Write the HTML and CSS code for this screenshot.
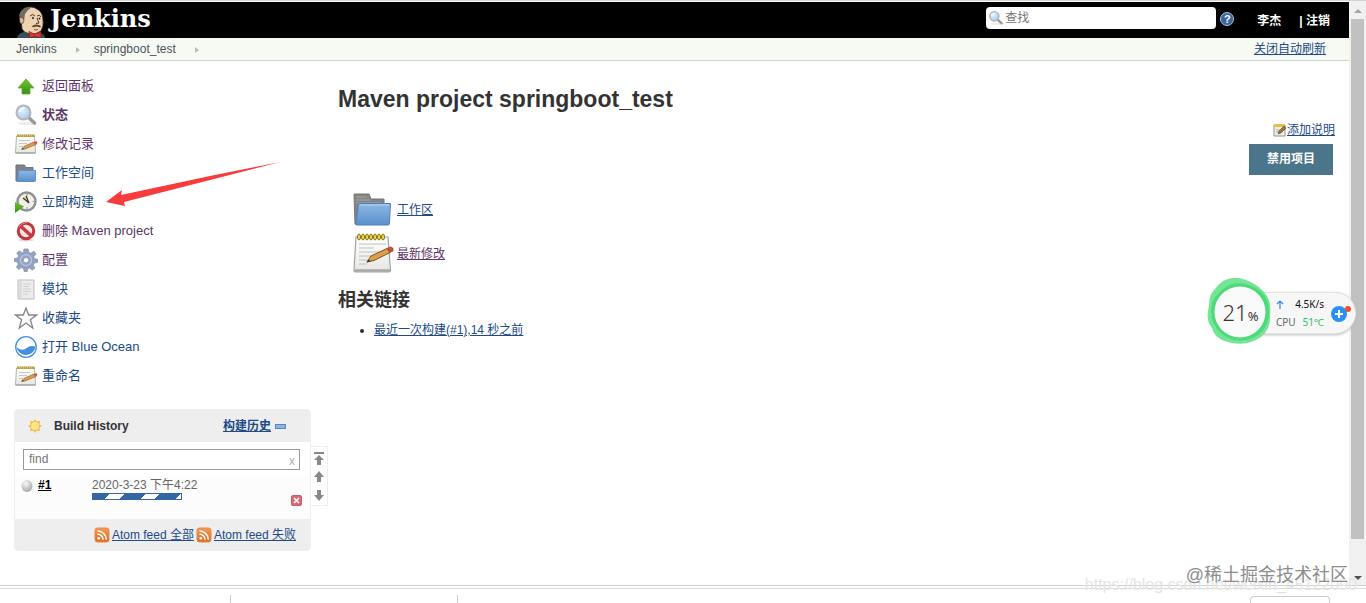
FILE: index.html
```html
<!DOCTYPE html>
<html lang="zh-CN">
<head>
<meta charset="utf-8">
<meta name="viewport" content="width=device-width, initial-scale=1">
<title>springboot_test [Jenkins]</title>
<link rel="stylesheet" href="styles.css">
</head>
<body>
<svg class="sprite" aria-hidden="true">
  <defs>
    <linearGradient id="gFolder" x1="0" y1="0" x2="0" y2="1"><stop offset="0" stop-color="#8db8e4"/><stop offset="1" stop-color="#5a8fcb"/></linearGradient>
    <linearGradient id="gPaper" x1="0" y1="0" x2="0" y2="1"><stop offset="0" stop-color="#ffffff"/><stop offset="1" stop-color="#e6e6e2"/></linearGradient>
    <linearGradient id="gGreen" x1="0" y1="0" x2="0" y2="1"><stop offset="0" stop-color="#6cc52f"/><stop offset="1" stop-color="#3c8f12"/></linearGradient>
    <linearGradient id="gRss" x1="0" y1="0" x2="0" y2="1"><stop offset="0" stop-color="#f39a56"/><stop offset="1" stop-color="#e0691c"/></linearGradient>
    <radialGradient id="gBall" cx=".4" cy=".3" r=".7"><stop offset="0" stop-color="#fafafa"/><stop offset="1" stop-color="#a9a9a9"/></radialGradient>
    <radialGradient id="gGlass" cx=".4" cy=".35" r=".7"><stop offset="0" stop-color="#e6f2fd"/><stop offset="1" stop-color="#a4c8ea"/></radialGradient>
  </defs>
  <symbol id="i-up" viewBox="0 0 24 24"><path d="M12 5 20 14H16V20H8V14H4Z" fill="url(#gGreen)" stroke="#5cab30" stroke-width=".8"/></symbol>
  <symbol id="i-search" viewBox="0 0 24 24"><ellipse cx="13" cy="20.5" rx="9" ry="1.6" fill="#ececec"/><path d="M14.500 14.500 20.500 20" stroke="#9a9a9a" stroke-width="3.600" stroke-linecap="round"/><circle cx="9.500" cy="9.500" r="7" fill="url(#gGlass)" stroke="#b3b5b7" stroke-width="2"/><path d="M5.500 9a4.500 4.500 0 0 1 5-4" stroke="#fff" stroke-width="1.400" fill="none"/></symbol>
  <symbol id="i-note" viewBox="0 0 24 24"><path d="M2.500 4H20.500L21.500 21H1.500Z" fill="url(#gPaper)" stroke="#b2b2ac"/><path d="M3 2.500H20.500V5H3Z" fill="#b99b3b"/><path d="M5 3.800H19" stroke="#eedb88" stroke-dasharray="1 1"/><path d="M5 8.500H16M5 11.500H13M5 14.500H9" stroke="#c6c6c6"/><path d="M1.500 21H21.500" stroke="#989898"/><path d="M8 17 10 14.500 20 10 22 12.500 11 17Z" fill="#dc9d43" stroke="#8b6635" stroke-width=".7"/><path d="M19.500 10.200 21.500 9.200Q24 9.500 23 11.700L21.500 12.700Z" fill="#d45542"/><path d="M7 17.800 8.500 15.800 10 17.300Z" fill="#444"/></symbol>
  <symbol id="i-folder" viewBox="0 0 24 24"><path d="M2 4H10.500L11.500 6.500H19V10H4V20H2Z" fill="#7c858e" stroke="#68727c"/><path d="M4.500 9.500H21.500V19.500Q21.500 20.500 20.500 20.500H3.500Z" fill="url(#gFolder)" stroke="#5f8fc4"/></symbol>
  <symbol id="i-clock" viewBox="0 0 24 24"><circle cx="12.500" cy="11.500" r="9" fill="#f0efe8" stroke="#8d9193" stroke-width="2.400"/><path d="M13 4V6M20 11.500H18.500M13 19V17" stroke="#999"/><path d="M8 8 14 6V12Z" fill="#e2d47c"/><path d="M15 13 9 8M15 13 12 6" stroke="#39352e" stroke-width="1.200"/><path d="M1 12 10 16.500 1 23Z" fill="url(#gGreen)"/></symbol>
  <symbol id="i-stop" viewBox="0 0 24 24"><ellipse cx="12" cy="21" rx="8" ry="1.500" fill="#ddd"/><circle cx="12" cy="12" r="7.700" fill="#f5e7e7" stroke="#c2363a" stroke-width="3"/><path d="M6.500 7 17.500 17" stroke="#cc3a3e" stroke-width="3.600"/><path d="M5 8Q8 3.500 13 3.500" stroke="#e78486" fill="none"/></symbol>
  <symbol id="i-gear" viewBox="0 0 24 24"><path fill-rule="evenodd" d="M10 1H14L14.600 4.300 17 5.300 20 3.300 22 6 19.700 8.800 20.500 10.800 23.500 11.300V14.300L20.300 15 19.200 17.200 21 20 18.300 22 15.500 20 13.800 20.600 13.200 23.500H10.200L9.600 20.500 7.300 19.600 4.600 21.500 2.500 19 4.300 16.200 3.500 14 .5 13.500V10.500L3.800 10 4.700 7.800 2.800 5 5.500 3 8.200 4.900 9.500 4.300ZM12 9.500A2.700 2.700 0 1 0 12 14.900 2.700 2.700 0 1 0 12 9.500Z" fill="#93a2c4" stroke="#8790a8" stroke-width=".8"/><circle cx="12" cy="12.200" r="5.500" fill="none" stroke="#b3c0da" stroke-width="1.500"/></symbol>
  <symbol id="i-doc" viewBox="0 0 24 24"><path d="M4 3H20V22H4Z" fill="#ededed" stroke="#bcbcbc"/><path d="M5 4H8V21H5Z" fill="#dcdcdc"/><path d="M9 7H17M9 9.500H15M9 12H17M9 14.500H17M9 17H14" stroke="#cecece"/></symbol>
  <symbol id="i-star" viewBox="0 0 24 24"><path d="M12 2 14.700 9H22.500L16.400 13.800 18.800 22 12 17 5.200 22 7.600 13.800 1.500 9H9.300Z" fill="#fbfbfb" stroke="#858585" stroke-width="1.300"/></symbol>
  <symbol id="i-ocean" viewBox="0 0 24 24"><circle cx="12" cy="12" r="10.300" fill="#fff" stroke="#4a8ed8" stroke-width="1.300"/><path d="M2.500 12C6 15 9 15.500 12 13.500S16 10 21.500 11.500A9.600 9.600 0 0 1 2.500 12Z" fill="#438ee0"/></symbol>
  <symbol id="i-rss" viewBox="0 0 16 16"><rect x="1" y="1" width="14" height="14" rx="2.500" fill="url(#gRss)" stroke="#e58a4b"/><circle cx="4.800" cy="11.300" r="1.400" fill="#fff"/><path d="M3.500 7.200A5.300 5.300 0 0 1 9 12.700M3.500 4A8.700 8.700 0 0 1 12.300 12.700" stroke="#fff" stroke-width="1.600" fill="none"/></symbol>
</svg>

<div class="window">
  <div class="page">
    <header class="header">
      <a class="brand" href="#">
        <svg class="butler" viewBox="0 0 30 32" aria-hidden="true">
          <path d="M1 32Q2 27 8 26L24 27Q29 28 29 32Z" fill="#335061"/>
          <path d="M6 23 5 14Q3 6 9 3 15-1 21 3 27 6 27 14 28 20 25 25 20 29 14 28 8 27 6 23Z" fill="#eed2b2" stroke="#30241b" stroke-width=".8"/>
          <path d="M5 15Q1 8 6 4 10 0 16 1 11 4 9 8L8 15Q8 18 5 18Z" fill="#6f6a62"/>
          <path d="M3.500 12Q7 10 8 15 7 19 4 17Z" fill="#e2bd98" stroke="#493a2d" stroke-width=".6"/>
          <path d="M14 10Q17 7 19 10M21 10Q24 8 25 11M21 12 23 17 20 17.500" fill="none" stroke="#4c3b2c"/>
          <circle cx="17" cy="12" r="1" fill="#222"/><circle cx="23.500" cy="12.500" r=".9" fill="#222"/>
          <path d="M16 20Q20 17 25 20L24 21.500Q20 19.500 17 21.500Z" fill="#51412e"/>
          <path d="M18 23.500Q20 24.500 22 23.500" fill="none" stroke="#8a4c3d"/>
          <path d="M13 25.500 18.500 28 25 25.500V32L18.500 30.500 13.500 32Z" fill="#d33833" stroke="#821512" stroke-width=".6"/>
        </svg>
        <span class="brand-name">Jenkins</span>
      </a>
      <div class="header-tools">
        <label class="search"><svg class="ico16" aria-hidden="true"><use href="#i-search"/></svg><input type="search" placeholder="查找" aria-label="查找"></label>
        <a class="help" href="#" aria-label="帮助">?</a>
        <a class="user" href="#">李杰</a>
        <a class="logout" href="#">| 注销</a>
      </div>
    </header>

    <nav class="crumbs" aria-label="路径">
      <a href="#">Jenkins</a><i class="caret"></i>
      <a href="#">springboot_test</a><i class="caret"></i>
      <a class="refresh" href="#">关闭自动刷新</a>
    </nav>

    <div class="body">
      <aside class="side">
        <ul class="tasks">
          <li><a class="visited" href="#"><svg class="ico24"><use href="#i-up"/></svg>返回面板</a></li>
          <li><a class="visited current" href="#"><svg class="ico24"><use href="#i-search"/></svg>状态</a></li>
          <li><a class="visited" href="#"><svg class="ico24"><use href="#i-note"/></svg>修改记录</a></li>
          <li><a href="#"><svg class="ico24"><use href="#i-folder"/></svg>工作空间</a></li>
          <li class="marked"><a href="#"><svg class="ico24"><use href="#i-clock"/></svg>立即构建</a>
            <svg class="arrow" viewBox="0 0 176 46" aria-hidden="true"><path d="M0 41 16 29 15 34 104 15 174 1 104 19 18 41L19 45Z" fill="#f83b3b"/></svg></li>
          <li><a class="visited" href="#"><svg class="ico24"><use href="#i-stop"/></svg>删除 Maven project</a></li>
          <li><a class="visited" href="#"><svg class="ico24"><use href="#i-gear"/></svg>配置</a></li>
          <li><a href="#"><svg class="ico24"><use href="#i-doc"/></svg>模块</a></li>
          <li><a href="#"><svg class="ico24"><use href="#i-star"/></svg>收藏夹</a></li>
          <li><a href="#"><svg class="ico24"><use href="#i-ocean"/></svg>打开 Blue Ocean</a></li>
          <li><a href="#"><svg class="ico24"><use href="#i-note"/></svg>重命名</a></li>
        </ul>

        <div class="history">
          <section class="pane">
            <div class="pane-head">
              <svg class="ico16" viewBox="0 0 16 16" aria-hidden="true"><path d="M8 1 9.500 3.500 13 3 12.500 6.500 15 8 12.500 9.500 13 13 9.500 12.500 8 15 6.500 12.500 3 13 3.500 9.500 1 8 3.500 6.500 3 3 6.500 3.500Z" fill="#f3b94c"/><circle cx="8" cy="8" r="4" fill="#fce889"/></svg>
              <h3>Build History</h3>
              <a class="trend" href="#">构建历史</a>
              <button class="collapse" type="button" aria-label="折叠"></button>
            </div>
            <div class="find">
              <input type="text" placeholder="find" aria-label="find">
              <button type="button" aria-label="清除">x</button>
            </div>
            <div class="build">
              <svg class="ball" viewBox="0 0 12 12" aria-hidden="true"><ellipse cx="6" cy="6" rx="5.500" ry="6" fill="url(#gBall)"/></svg>
              <a class="build-no" href="#">#1</a>
              <div class="build-info"><a href="#">2020-3-23 下午4:22</a><div class="progress" role="progressbar" aria-label="#1"><span></span></div></div>
              <button class="cancel" type="button" aria-label="取消"><svg viewBox="0 0 9 9"><path d="M2 2 7 7M7 2 2 7" stroke="#fff" stroke-width="1.600"/></svg></button>
            </div>
            <div class="feeds">
              <svg class="ico16"><use href="#i-rss"/></svg><a href="#">Atom feed 全部</a>
              <svg class="ico16"><use href="#i-rss"/></svg><a href="#">Atom feed 失败</a>
            </div>
          </section>
          <div class="pager">
            <button type="button" aria-label="顶部"><svg viewBox="0 0 12 14"><path d="M1 0H11V2H1ZM6 3 11 8H8V13H4V8H1Z"/></svg></button>
            <button type="button" aria-label="上一页"><svg viewBox="0 0 12 14"><path d="M6 1 11 7H8V12H4V7H1Z"/></svg></button>
            <button type="button" aria-label="下一页"><svg viewBox="0 0 12 14"><path d="M6 13 11 7H8V2H4V7H1Z"/></svg></button>
          </div>
        </div>
      </aside>

      <main class="main">
        <h1>Maven project springboot_test</h1>
        <div class="actions">
          <a class="describe" href="#"><svg class="ico14" viewBox="0 0 14 14" aria-hidden="true"><path d="M1 2H12V13H1Z" fill="#efefe8" stroke="#8f8f88"/><path d="M1 1H12V4H1Z" fill="#e2c044"/><path d="M3 7H8M3 9H6" stroke="#aaa"/><path d="M5 11 6 8 11 3 13 5 8 10Z" fill="#8f7840" stroke="#5a4a2c" stroke-width=".6"/></svg>添加说明</a>
          <button class="disable" type="button">禁用项目</button>
        </div>
        <ul class="shortcuts">
          <li><svg class="ico44" viewBox="0 0 44 44" aria-hidden="true"><path d="M4 6H19L21 11H34V16H8V36H5Z" fill="#858585" stroke="#757575"/><path d="M6 9H17M6 12H20M6 15H31" stroke="#a5a5a5"/><path d="M8.500 15.500H40.500L39.500 35Q39.500 37 38 37H7Q5 37 6 35Z" fill="url(#gFolder)" stroke="#4f80b7"/><path d="M10 17H39" stroke="#b5d4f2"/></svg><a href="#">工作区</a></li>
          <li><svg class="ico44" viewBox="0 0 44 44" aria-hidden="true"><path d="M6 5H38L40.500 38Q40.500 40 39 40H6Q4 40 4 38Z" fill="url(#gPaper)" stroke="#a2a2a2" stroke-width="1.200"/><path d="M5 38.500H40" stroke="#a9a9a9" stroke-width="2.500"/><path d="M9 12H36M9 16H24M9 20H31M9 24H26M9 28H18M9 32H17" stroke="#c0c0c0"/><g fill="#f2dc4b" stroke="#877315"><ellipse cx="9" cy="5" rx="1.500" ry="3"/><ellipse cx="13" cy="5" rx="1.500" ry="3"/><ellipse cx="17" cy="5" rx="1.500" ry="3"/><ellipse cx="21" cy="5" rx="1.500" ry="3"/><ellipse cx="25" cy="5" rx="1.500" ry="3"/><ellipse cx="29" cy="5" rx="1.500" ry="3"/><ellipse cx="33" cy="5" rx="1.500" ry="3"/></g><path d="M17 30 21 24 37 16.500 40 20.500 24 28.500Z" fill="#dda044" stroke="#775327"/><path d="M37 16.500 40 15Q44 15 43 19L40 20.500Z" fill="#d34b40" stroke="#8a4039" stroke-width=".6"/><path d="M16.500 30.500 18.500 27.500 20.500 29.300Z" fill="#333"/></svg><a class="visited" href="#">最新修改</a></li>
        </ul>
        <h2>相关链接</h2>
        <ul class="links"><li><a href="#">最近一次构建(#1),14 秒之前</a></li></ul>
      </main>
    </div>
  </div>
  <div class="scroll" aria-hidden="true"><i class="tri up"></i><i class="thumb"></i><i class="tri down"></i></div>
</div>

<div class="shelf" aria-hidden="true"><i class="slot first"></i><i class="slot"></i><i class="tab"></i></div>

<div class="monitor">
  <svg class="ring" viewBox="0 0 66 68" aria-hidden="true"><path d="M8 12Q20-4 39 3 50 7 57 15 65 24 63 38 64 52 54 60 41 69 25 66 8 63 5 51-2 43 2 29 2 17 8 12Z" fill="#74e495"/><path d="M12 16Q25 1 45 9 62 17 62 34 62 52 48 60 31 68 16 58 4 49 4 33 4 23 12 16Z" fill="#42d673" opacity=".75"/><circle cx="33" cy="35" r="25.500" fill="#f9f9f9"/></svg>
  <div class="percent"><b>21</b>%</div>
  <div class="stats">
    <div class="stat"><svg viewBox="0 0 8 9" aria-hidden="true"><path d="M4 9V1M1 4 4 1 7 4" fill="none" stroke="#2c8cf4" stroke-width="1.200"/></svg><span>4.5K/s</span></div>
    <div class="stat cpu"><span>CPU</span><em>51℃</em></div>
  </div>
  <button class="boost" type="button" aria-label="加速"><svg viewBox="0 0 20 20"><circle cx="8" cy="11" r="8" fill="#2b90f5"/><path d="M8 7V15M4 11H12" stroke="#fff" stroke-width="2"/><circle cx="17" cy="6" r="3" fill="#f0502c"/></svg></button>
</div>
<div class="mark url">https://blog.csdn.net/weixin_45122090</div>
<div class="mark site">@稀土掘金技术社区</div>
</body>
</html>
```
FILE: styles.css
```css
* { box-sizing: border-box; }
body {
  margin: 0;
  min-height: 100vh;
  display: flex;
  flex-direction: column;
  position: relative;
  overflow: hidden;
  background: #fff;
  color: #333;
  font: 12px/16px "Liberation Sans", "Noto Sans CJK SC", sans-serif;
}
a { color: #204a87; }
a.visited { color: #5c3566; }
h1, h2, h3, ul { margin: 0; padding: 0; }
button { border: 0; padding: 0; background: none; font: inherit; cursor: pointer; }
svg { display: block; flex: none; }
.sprite { position: absolute; width: 0; height: 0; }
.ico14 { width: 14px; height: 14px; }
.ico16 { width: 16px; height: 16px; }
.ico24 { width: 24px; height: 24px; }
.ico44 { width: 44px; height: 44px; }

.window { flex: 1; display: flex; border-top: 1px solid #d4d4d4; border-bottom: 1px solid #ccd3cc; }
.page { flex: 1; min-width: 0; padding-top: 1px; }

.header { display: flex; justify-content: space-between; height: 36px; padding: 0 19px 0 16px; background: #000; overflow: hidden; }
.brand { display: flex; text-decoration: none; gap: 4px; padding-top: 4px; }
.butler { width: 30px; height: 32px; }
.brand-name { color: #fff; font: bold 24px/25px "DejaVu Serif", serif; }
.header-tools { display: flex; align-items: flex-start; padding-top: 5px; }
.search { display: flex; align-items: center; gap: 1px; width: 230px; height: 22px; padding: 0 2px; border-radius: 4px; background: #fff; }
.search input { flex: 1; min-width: 0; border: 0; padding: 0; outline: 0; background: none; font: inherit; }
::placeholder { color: #757575; opacity: 1; }
.help { width: 14px; height: 14px; margin: 5px 23px 0 4px; border: 1px solid #a9c3e3; border-radius: 50%; background: #3a639f; color: #fff; font: bold 11px/12px "Liberation Sans", sans-serif; text-align: center; text-decoration: none; }
.user, .logout { padding-top: 6px; color: #fff; font-weight: bold; text-decoration: none; }
.logout { margin-left: 18px; }

.crumbs { display: flex; align-items: center; height: 23px; padding: 0 23px 0 16px; border-bottom: 1px solid #ced5ce; background: #f6faf2; }
.crumbs a { color: #4d545d; text-decoration: none; }
.crumbs .caret { width: 0; height: 0; margin: 2px 14px 0 19px; border: 3px solid transparent; border-left: 4px solid #b8bab6; border-right: 0; }
.crumbs .refresh { margin-left: auto; color: #204a87; text-decoration: underline; }

.body { display: flex; gap: 10px; padding: 10px 14px 0; }
.side { flex: none; width: 314px; }
.tasks { list-style: none; font-size: 13px; }
.tasks li { height: 29px; display: flex; align-items: center; }
.tasks a { display: flex; align-items: center; gap: 4px; text-decoration: none; }
.tasks .current { font-weight: bold; }
.marked { position: relative; }
.arrow { position: absolute; left: 92px; bottom: 9px; width: 176px; height: 46px; }

.history { display: flex; align-items: flex-start; margin-top: 19px; }
.pane { flex: 1; min-width: 0; border: 1px solid #eee; border-radius: 4px; background: #fff; }
.pane-head { display: flex; align-items: center; height: 32px; padding: 0 24px 0 12px; background: #eee; }
.pane-head h3 { margin-left: 11px; font-size: 12px; }
.trend { margin-left: auto; font-weight: bold; }
.collapse { width: 11px; height: 5px; margin-left: 4px; border: 1px solid #538abd; background: #8bb5dc; }
.find { display: flex; margin: 7px 10px 6px 8px; height: 21px; border: 1px solid #999; }
.find input { flex: 1; min-width: 0; border: 0; padding: 0 5px 2px; outline: 0; font: inherit; }
.find button { padding: 2px 4px 0; color: #aaa; }
.build { display: flex; align-items: flex-start; height: 43px; padding: 1px 8px 0 6px; background: #fcfcfc; }
.ball { width: 12px; height: 12px; margin-top: 3px; }
.build-no { width: 54px; margin-left: 5px; color: #000; font-weight: bold; }
.build-info { flex: 1; }
.build-info a { color: #666; text-decoration: none; }
.progress { width: 90px; height: 7px; border: 1px solid #3465a4; background: #fff; }
.progress span { display: block; height: 5px; background: repeating-linear-gradient(135deg, #3465a4 0 12px, #fff 12px 22px, #3465a4 22px 25px); }
.cancel { width: 11px; height: 11px; align-self: flex-end; margin-bottom: 13px; border: 1px solid #c55c66; border-radius: 2px; background: #dc6872; }
.feeds { display: flex; align-items: center; justify-content: flex-end; gap: 2px; height: 31px; padding-right: 14px; background: #eee; }
.pager { flex: none; width: 17px; margin-top: 37px; padding: 5px 0 3px; border: 1px solid #eee; border-left: 0; display: grid; justify-items: center; gap: 4px; }
.pager svg { width: 12px; height: 14px; fill: #888; }

.main { flex: 1; min-width: 0; }
.main h1 { padding-top: 14px; font-size: 23px; line-height: 28px; }
.actions { display: flex; flex-direction: column; align-items: flex-end; padding-top: 9px; }
.describe { display: flex; align-items: center; }
.disable { margin: 6px 2px 13px 0; padding: 7px 18px 8px; background: #4b758b; color: #fff; font-weight: bold; }
.shortcuts { list-style: none; padding-left: 12px; }
.shortcuts li { display: flex; align-items: center; gap: 3px; }
.main h2 { padding-top: 12px; font-size: 18px; line-height: 24px; }
.links { padding: 10px 0 0 36px; }

.scroll { flex: none; width: 17px; display: flex; flex-direction: column; align-items: center; padding: 8px 0 5px; background: #f1f1f1; }
.tri { border: 4px solid transparent; }
.tri.up { border-top: 0; border-bottom-color: #a3a3a3; }
.tri.down { margin-top: auto; border-bottom: 0; border-top-color: #505050; }
.thumb { flex: 0 0 91%; width: 13px; margin-top: 6px; background: #c1c1c1; }

.shelf { flex: none; display: flex; align-items: flex-end; height: 17px; padding-right: 36px; background: linear-gradient(#fff 2px, #d7dcd7 2px 3px, #fff 3px); }
.slot { width: 227px; height: 8px; border-right: 1px solid #ccc; }
.slot.first { width: 231px; }
.tab { width: 80px; height: 7px; margin-left: auto; border: 1px solid #ccc; border-bottom: 0; border-radius: 4px 4px 0 0; }

.monitor { position: absolute; top: 292px; right: 10px; width: 116px; height: 42px; display: flex; align-items: center; padding-left: 35px; border: 1px solid #e3e3e3; border-radius: 0 21px 21px 0; background: #f7f7f7; box-shadow: 0 1px 3px #bbb; font-family: "Noto Sans", "Noto Sans CJK SC", sans-serif; }
.ring { position: absolute; left: -34px; top: -16px; width: 66px; height: 68px; }
.percent { position: absolute; left: -34px; top: 5px; width: 66px; padding-left: 1px; text-align: center; font-size: 13px; line-height: 28px; color: #333; }
.percent b { font-size: 22px; font-weight: 300; }
.stats { width: 48px; }
.stat { display: flex; align-items: center; justify-content: space-between; height: 18px; color: #111; font-size: 10px; }
.stat svg { width: 8px; height: 9px; }
.stat.cpu { color: #666; }
.stat em { color: #27c667; font-style: normal; }
.boost { margin-left: 7px; }
.boost svg { width: 20px; height: 20px; }

.mark { position: absolute; white-space: nowrap; pointer-events: none; }
.mark.url { right: 9px; bottom: 9px; color: #e4e4e4; font-size: 16px; line-height: 18px; }
.mark.site { right: 18px; bottom: 16px; color: #8d8d8d; font-size: 18px; line-height: 24px; text-shadow: 0 0 2px #fff; }
```
